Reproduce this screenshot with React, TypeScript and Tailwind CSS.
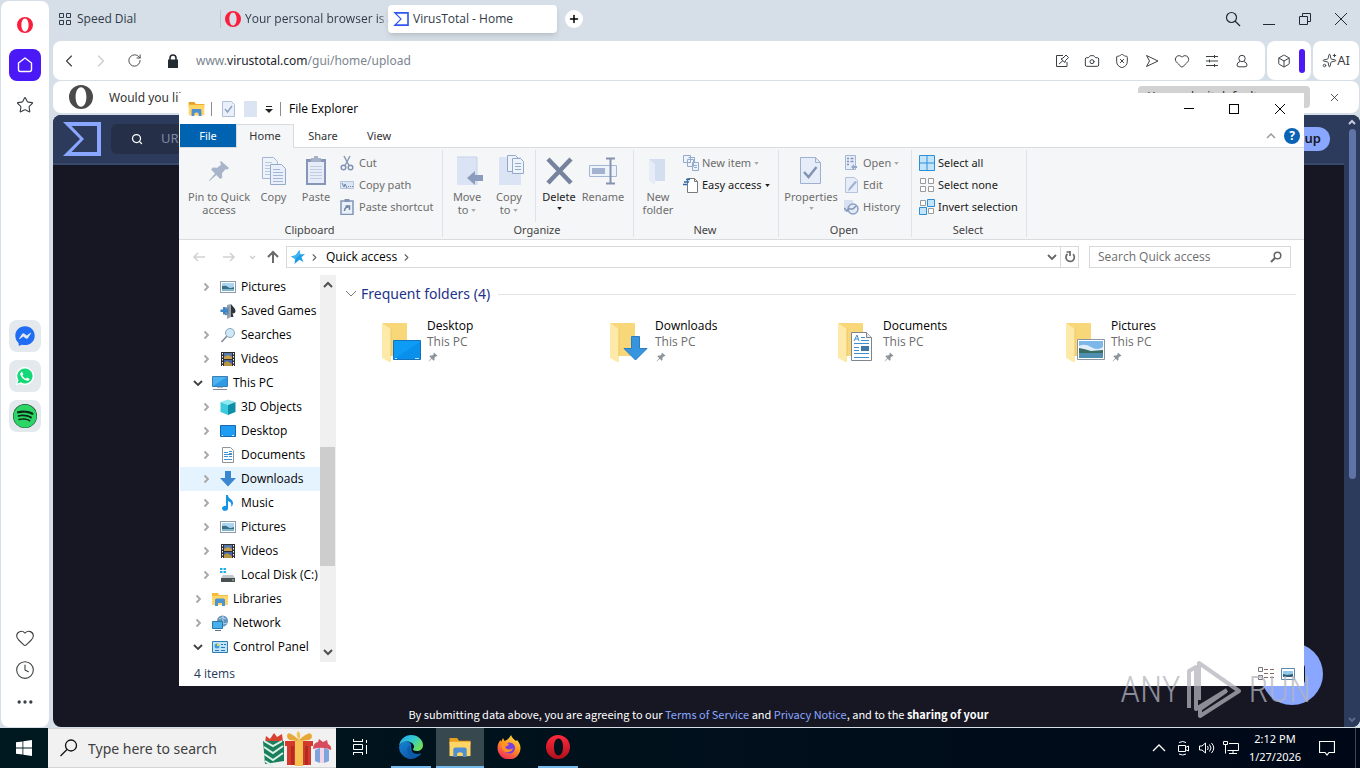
import { useState } from "react";
import type { ReactElement, ReactNode } from "react";
import { Box, Camera, ChevronLeft, ChevronRight, Clock4, Ellipsis, Heart, Plus, RotateCw, Search, ShieldX, Sparkles, Star, X } from "lucide-react";
import { FaFacebookMessenger, FaSpotify } from "react-icons/fa";

type IconProps = { className?: string };

/* ---------- shared drawings ---------- */

const OperaLogo = ({ className }: IconProps): ReactElement => (
  <svg viewBox="0 0 24 24" className={className} fill="currentColor" fillRule="evenodd" aria-hidden="true">
    <path d="M12 0a12 12 0 1 0 0 24 12 12 0 0 0 0-24zM12 2.200c3.300 0 5.400 4.400 5.400 9.800s-2.100 9.800-5.400 9.800-5.400-4.400-5.400-9.800 2.100-9.800 5.400-9.800z" />
  </svg>
);

const VtLogo = ({ className }: IconProps): ReactElement => (
  <svg viewBox="0 0 38 34" className={className} fill="currentColor" fillRule="evenodd" aria-hidden="true">
    <path d="M0 0h38v34H0l17-17zM8.500 4l12.500 13L8.500 30H34V4z" />
  </svg>
);

const Caret = ({ className }: IconProps): ReactElement => (
  <svg viewBox="0 0 6 4" className={`inline-block h-[3px] w-[5px] ${className ?? ""}`} aria-hidden="true">
    <path d="M0 0h6L3 4z" fill="currentColor" />
  </svg>
);

const Pin = ({ className }: IconProps): ReactElement => (
  <svg viewBox="0 0 22 22" className={className} fill="currentColor" aria-hidden="true">
    <path d="M13 1l8 7-1.500 1.500-2-.3-3.500 4 .3 4.300-2 1.500-4-4L1.500 21 1 20.500 7 13.500 3 9.500 5 7.500l4.300.3L13.200 4.500 12 2.500z" />
  </svg>
);

const ExplorerFolder = ({ className }: IconProps): ReactElement => (
  <svg viewBox="0 0 24 22" className={className} aria-hidden="true">
    <path d="M1 1h8l2 3h12v4H1z" fill="#e8a01e" />
    <path d="M1 5h22v15H1z" fill="#ffd666" />
    <path d="M5 21v-8q0-2 2-2h10q2 0 2 2v8h-4v-3q0-2-3-2t-3 2v3z" fill="#4d8fd0" />
  </svg>
);

/* ---------- navigation tree drawings, all on a 16px box ---------- */

const Svg16 = ({ children }: { children: ReactNode }): ReactElement => (
  <svg viewBox="0 0 16 16" className="size-4 shrink-0" aria-hidden="true">{children}</svg>
);

const PicturesIcon = (): ReactElement => (
  <Svg16>
    <rect x=".5" y="2.5" width="15" height="11" fill="#fff" stroke="#8f9aa5" />
    <rect x="2" y="4" width="12" height="8" fill="#a9d4f2" />
    <path d="M2 7q4-1 6 1t6 0v4H2z" fill="#3c6f86" />
    <path d="M2 10h12v2H2z" fill="#7fb6cf" />
  </Svg16>
);

const SavedGamesIcon = (): ReactElement => (
  <Svg16>
    <path d="M11 1c1 2 4.500 4 4.500 7 0 2-2 3-3 2l1 4H8z" fill="#2e3439" />
    <path d="M7 2l4-1v13l-4 2z" fill="#9aa3ab" />
    <path d="M5 5q3-2 4 0v6q-2 2-4 1z" fill="#6f8fae" />
    <path d="M3 4h2.500v2.500H8v2.500H5.500V11.500H3V9H.5V6.500H3z" fill="#3d85c6" />
  </Svg16>
);

const SearchesIcon = (): ReactElement => (
  <Svg16>
    <path d="M7 9l-5.500 6" stroke="#7d8a96" strokeWidth="1.500" />
    <circle cx="10" cy="6" r="4.500" fill="#cfe8f8" stroke="#8aa4b8" />
  </Svg16>
);

const VideosIcon = (): ReactElement => (
  <Svg16>
    <path d="M1 1h14v14H1z" fill="#2b2f33" />
    <path d="M4 2h8v6H4z" fill="#587aa8" />
    <path d="M4 6l4-2 4 2v2H4z" fill="#c9a24b" />
    <path d="M4 9h8v6H4z" fill="#4468a8" />
    <path d="M4 12l3-2 5 3v2H4z" fill="#b99443" />
    <path d="M2.500 2v13M13.500 2v13" stroke="#fff" strokeDasharray="1.500 1.500" />
  </Svg16>
);

const ThisPcIcon = (): ReactElement => (
  <Svg16>
    <path d="M.5 1.500h15v10H.5z" fill="#4db2f0" stroke="#3a7fb0" />
    <path d="M1 11L15 2v9z" fill="#2e9be6" />
    <path d="M1 14.500h14" stroke="#7f8a94" />
    <path d="M5 12.500h6" stroke="#b7c0c8" />
  </Svg16>
);

const ObjectsIcon = (): ReactElement => (
  <Svg16>
    <path d="M8 .5l7.500 2.500L8 6 .5 3z" fill="#8fe9f0" />
    <path d="M.5 3L8 6v10l-7.500-3z" fill="#3ccbdc" />
    <path d="M15.500 3L8 6v10l7.500-3z" fill="#0e8fa6" />
  </Svg16>
);

const DesktopIcon = (): ReactElement => (
  <Svg16>
    <path d="M.5 2.500h15v11H.5z" fill="#1e9cf2" stroke="#1469b0" />
    <path d="M2 12.500h1M12 12.500h2" stroke="#d5ecff" />
  </Svg16>
);

const DocumentsIcon = (): ReactElement => (
  <Svg16>
    <path d="M2.500.500h8l3 3v12h-11z" fill="#fff" stroke="#8b959e" />
    <path d="M4 5.500h4M9 4.500h3M9 6.500h3M4 9.500h4M9 9.500h3M4 12.500h8M4 7.500h8" stroke="#3c8fd0" />
  </Svg16>
);

const DownloadsIcon = (): ReactElement => (
  <Svg16>
    <path d="M5 0h6v7h5l-8 8.500L0 7h5z" fill="#3a86d0" />
  </Svg16>
);

const MusicIcon = (): ReactElement => (
  <Svg16>
    <path d="M6 0h2c0 4 5 4 5 8 0 2-1 3-2 4 1-3 0-5-3-6v7a3 2.500 0 1 1-2-2z" fill="#1793e6" />
  </Svg16>
);

const DiskIcon = (): ReactElement => (
  <Svg16>
    <path d="M0 1h2.500v2H0zM3.500 1H6v2H3.500zM0 4h2.500v2H0zM3.500 4H6v2H3.500z" fill="#22aee8" />
    <path d="M3 8h10l2 3H1z" fill="#c3c8cc" />
    <path d="M1 11h14v4H1z" fill="#4a4f54" />
    <path d="M12 13h2" stroke="#8fe37d" />
  </Svg16>
);

const LibrariesIcon = (): ReactElement => (
  <Svg16>
    <path d="M0 2h6l1 2h9v10H0z" fill="#f5bd3c" />
    <path d="M0 5h16v9H0z" fill="#ffd668" />
    <path d="M3 15V9q0-1.500 1.500-1.500h7Q13 7.500 13 9v6h-3v-3H6v3z" fill="#4d93d2" />
  </Svg16>
);

const NetworkIcon = (): ReactElement => (
  <Svg16>
    <circle cx="10.500" cy="6" r="5.500" fill="#5d93bd" />
    <path d="M7 4q3-3 7 0M8 8q3 2 7 0M11 1v8" stroke="#b8d6e8" fill="none" />
    <path d="M.5 6.500h10v7H.5z" fill="#49b0ee" stroke="#2c78ab" />
    <path d="M3 15.500h6" stroke="#5e7485" />
  </Svg16>
);

const ControlPanelIcon = (): ReactElement => (
  <Svg16>
    <path d="M.5 2.500h15v11H.5z" fill="#bfe3f8" stroke="#2f7cb5" />
    <circle cx="5" cy="7" r="2.500" fill="#3b9de0" />
    <path d="M5 4.500A2.500 2.500 0 0 1 7.500 7H5z" fill="#f2d24c" />
    <path d="M9 5.500h2M12 5.500h2M9 8.500h4M3 11.500h4M9 11.500h4" stroke="#2878b8" />
  </Svg16>
);

/* ---------- ribbon drawings ---------- */

const Svg32 = ({ children }: { children: ReactNode }): ReactElement => (
  <svg viewBox="0 0 32 32" className="mb-[3px] size-8 shrink-0" fill="none" aria-hidden="true">{children}</svg>
);

const CopyPages = (): ReactElement => (
  <Svg32>
    <path d="M4.500 2.500h11l4 4v17h-15z" fill="#eef3fa" stroke="#a3b6d4" />
    <path d="M7 7.500h7M7 10.500h9M7 13.500h9M7 16.500h9M7 19.500h9" stroke="#b9c8df" />
    <path d="M12.500 9.500h11l4 4v16h-15z" fill="#e9f0fb" stroke="#93aacd" />
    <path d="M15 14.500h7M15 17.500h10M15 20.500h10M15 23.500h10M15 26.500h10" stroke="#a3b6d4" />
  </Svg32>
);

const PasteBoard = (): ReactElement => (
  <Svg32>
    <path d="M6 4h20v26H6z" fill="#8796b8" />
    <path d="M8 7h16v21H8z" fill="#e6edf9" />
    <path d="M10 11.500h12M10 14.500h12M10 17.500h12M10 20.500h12M10 23.500h12" stroke="#c0cde2" />
    <path d="M11 3h3V1h4v2h3v4H11z" fill="#a7b2c8" />
  </Svg32>
);

const MoveTo = (): ReactElement => (
  <Svg32>
    <path d="M6 2h20v28H6z" fill="#dbe4f4" />
    <path d="M6 2h20v28" stroke="#c6d3ea" />
    <path d="M16 23l8-7v4h8v6h-8v4z" fill="#8b9cbc" />
  </Svg32>
);

const CopyTo = (): ReactElement => (
  <Svg32>
    <path d="M6 2h22v28H6z" fill="#dbe4f4" />
    <path d="M14.500.500h8l3 3v13h-11z" fill="#eef3fa" stroke="#93aacd" />
    <path d="M19.500 3.500h8l3 3v12h-11z" fill="#eef3fa" stroke="#93aacd" />
    <path d="M22 8.500h6M22 11.500h6M22 14.500h6" stroke="#93aacd" />
  </Svg32>
);

const DeleteCross = (): ReactElement => (
  <Svg32>
    <path d="M5 4l23 24M28 4L5 28" stroke="#76839d" strokeWidth="4.500" />
  </Svg32>
);

const RenameBox = (): ReactElement => (
  <Svg32>
    <path d="M2.500 10.500h27v11h-27z" fill="#eef3fa" stroke="#a3b6d4" />
    <path d="M5 13h13v6H5z" fill="#a3b3cf" />
    <path d="M19 3.500h4.500M28 3.500h-4.500v25M19 28.500h9" stroke="#8493b0" strokeWidth="2" />
  </Svg32>
);

const NewFolder = (): ReactElement => (
  <Svg32>
    <path d="M7 4h16v22H7z" fill="#d3deef" />
    <path d="M7 4l6 5v21l-6-4z" fill="#e6edf8" />
  </Svg32>
);

const PropertiesPage = (): ReactElement => (
  <Svg32>
    <path d="M5.500 2.500h15l5 5v21h-20z" fill="#e6edf9" stroke="#9fb1d0" />
    <path d="M20.500 2.500v5h5" stroke="#9fb1d0" />
    <path d="M9 17l4.500 5L21.500 12" stroke="#8294b6" strokeWidth="2.500" />
  </Svg32>
);

const CutIcon = (): ReactElement => (
  <Svg16>
    <path d="M4 1l5 9.500M10 1L5 10.500" stroke="#8b9ab5" strokeWidth="1.500" />
    <circle cx="3.500" cy="12.500" r="2.300" fill="none" stroke="#8294b6" strokeWidth="1.500" />
    <circle cx="10.500" cy="12.500" r="2.300" fill="none" stroke="#8294b6" strokeWidth="1.500" />
  </Svg16>
);

const CopyPathIcon = (): ReactElement => (
  <Svg16>
    <path d="M.5 4.500h13v7H.5z" fill="#dde6f4" stroke="#b5c4dc" />
    <path d="M2 6l2 4 1-3 2 4M8 9.500h1M10 9.500h1M12 9.500h1" stroke="#7084a8" fill="none" />
  </Svg16>
);

const PasteShortcutIcon = (): ReactElement => (
  <Svg16>
    <path d="M1 2h12v13.500H1z" fill="#eaf0fa" stroke="#8294b6" strokeWidth="1.500" />
    <path d="M4.500 0h5v3h-5z" fill="#8294b6" />
    <path d="M4.500 12c0-3 1-4 4-4M5.500 7h4v4" stroke="#6f82a6" fill="none" strokeWidth="1.500" />
  </Svg16>
);

const NewItemIcon = (): ReactElement => (
  <Svg16>
    <path d="M.5.500h7v7h-7zM4.500 4.500h6v7h-6zM9.500 7.500h6v8h-6z" fill="#eef3fa" stroke="#93aacd" />
    <path d="M5.500 2.500h6v5" fill="none" stroke="#93aacd" />
    <path d="M11 10.500h3M11 12.500h3" stroke="#93aacd" />
  </Svg16>
);

const EasyAccessIcon = (): ReactElement => (
  <Svg16>
    <path d="M4.500 1.500h7l3 3v11h-10z" fill="#fff" stroke="#7a7a7a" />
    <path d="M11.500 1.500v3h3" stroke="#7a7a7a" fill="none" />
    <path d="M3 2.500h4M1 5h5M0 7.500h4" stroke="#2a6cab" strokeWidth="1.500" />
  </Svg16>
);

const OpenIcon = (): ReactElement => (
  <Svg16>
    <path d="M1.500.500h10v14h-10z" fill="#e6edf9" stroke="#a3b6d4" />
    <path d="M3 3.500h2M3 6.500h2M3 9.500h2M6.500 3.500h3M6.500 6.500h3" stroke="#8294b6" strokeWidth="1.500" />
    <path d="M7 12l3-3v2h3v2h-3v2z" fill="#93a6c8" />
  </Svg16>
);

const EditIcon = (): ReactElement => (
  <Svg16>
    <path d="M1.500.500h9l3 3v12h-12z" fill="#e6edf9" stroke="#b5c4dc" />
    <path d="M13 5L7 12l-3 2.500 1-3.500 6-7z" fill="#9fb1d0" />
  </Svg16>
);

const HistoryIcon = (): ReactElement => (
  <Svg16>
    <path d="M0 1h9v12H0z" fill="#d7e1f2" />
    <circle cx="9" cy="10" r="5" fill="#e2eaf6" stroke="#8da0c2" strokeWidth="1.500" />
    <path d="M9 10l3-3M6 10h3M0 9l3 3 3-3" stroke="#8294b6" fill="none" strokeWidth="1.500" />
  </Svg16>
);

const SelectAllIcon = (): ReactElement => (
  <Svg16>
    <path d="M.5.500h15v15H.5zM8 0v16M0 8h16" fill="#c2e5fb" stroke="#2f8fd6" />
  </Svg16>
);

const SelectNoneIcon = (): ReactElement => (
  <Svg16>
    <path d="M1.500 1.500h5v5h-5zM9.500 1.500h5v5h-5zM1.500 9.500h5v5h-5zM9.500 9.500h5v5h-5z" fill="#fff" stroke="#9a9a9a" />
  </Svg16>
);

const InvertIcon = (): ReactElement => (
  <Svg16>
    <path d="M1.500 1.500h5v5h-5zM9.500 9.500h5v5h-5z" fill="#fff" stroke="#9a9a9a" />
    <path d="M8.500.500h7v7h-7zM.5 8.500h7v7h-7z" fill="#c2e5fb" stroke="#2f8fd6" />
  </Svg16>
);

/* ---------- large folders in the content pane ---------- */

const FolderArt = ({ children }: { children: ReactNode }): ReactElement => (
  <svg viewBox="0 0 40 44" className="h-11 w-10 shrink-0" aria-hidden="true">
    <path d="M1 5h24v33H1z" fill="#f7d777" />
    <path d="M0 5l9 6v34l-9-5z" fill="#fde9a8" />
    <path d="M9 11v27" stroke="#ecc765" />
    {children}
  </svg>
);

const frequentFolders = [
  {
    name: "Desktop",
    art: (
      <FolderArt>
        <path d="M11.500 22.500h27v19h-27z" fill="#0d9bf5" stroke="#1272bd" />
        <path d="M12 41L38 24v17z" fill="#0890ec" />
        <path d="M13 40.500h2M33 40.500h4" stroke="#bfe3ff" />
      </FolderArt>
    )
  },
  {
    name: "Downloads",
    art: (
      <FolderArt>
        <path d="M21.500 18.500h8v12h7.500L25.500 42 14 30.500h7.500z" fill="#3795e0" stroke="#2b7cc2" />
      </FolderArt>
    )
  },
  {
    name: "Documents",
    art: (
      <FolderArt>
        <path d="M13.500 14.500h15l5 5v23h-20z" fill="#fff" stroke="#7d868e" />
        <path d="M28.500 14.500v5h5" fill="#e4e8ec" stroke="#7d868e" />
        <path d="M16 23l3-6 2 6M17 21h3M23 19.500h4M23 22.500h8M16 25.500h15M16 29.500h5M16 32.500h5M16 35.500h15M16 39.500h15" stroke="#3f8fce" fill="none" />
        <path d="M23 28h8v5h-8z" fill="#3f78a8" />
      </FolderArt>
    )
  },
  {
    name: "Pictures",
    art: (
      <FolderArt>
        <path d="M11.500 21.500h27v20h-27z" fill="#fff" stroke="#8b959e" />
        <path d="M13 23h24v17H13z" fill="#7db7ea" />
        <path d="M13 28q6-3 12 1t12 0v5H13z" fill="#dfeefa" />
        <path d="M13 30q6 1 12 3l12-1v4H13z" fill="#3c6b62" />
        <path d="M13 35h24v5H13z" fill="#4f8fb0" />
      </FolderArt>
    )
  }
];

const tree = [
  { label: "Pictures", icon: <PicturesIcon />, depth: 1, state: "closed" },
  { label: "Saved Games", icon: <SavedGamesIcon />, depth: 1, state: "leaf" },
  { label: "Searches", icon: <SearchesIcon />, depth: 1, state: "closed" },
  { label: "Videos", icon: <VideosIcon />, depth: 1, state: "closed" },
  { label: "This PC", icon: <ThisPcIcon />, depth: 0, state: "open" },
  { label: "3D Objects", icon: <ObjectsIcon />, depth: 1, state: "closed" },
  { label: "Desktop", icon: <DesktopIcon />, depth: 1, state: "closed" },
  { label: "Documents", icon: <DocumentsIcon />, depth: 1, state: "closed" },
  { label: "Downloads", icon: <DownloadsIcon />, depth: 1, state: "closed", active: true },
  { label: "Music", icon: <MusicIcon />, depth: 1, state: "closed" },
  { label: "Pictures", icon: <PicturesIcon />, depth: 1, state: "closed" },
  { label: "Videos", icon: <VideosIcon />, depth: 1, state: "closed" },
  { label: "Local Disk (C:)", icon: <DiskIcon />, depth: 1, state: "closed" },
  { label: "Libraries", icon: <LibrariesIcon />, depth: 0, state: "closed" },
  { label: "Network", icon: <NetworkIcon />, depth: 0, state: "closed" },
  { label: "Control Panel", icon: <ControlPanelIcon />, depth: 0, state: "open" }
];

/* ---------- browser ---------- */

const Sidebar = (): ReactElement => (
  <nav aria-label="Sidebar" className="my-px ml-px flex w-12 shrink-0 flex-col items-center rounded-lg bg-white text-[#3c4043]">
    <button aria-label="Opera menu" className="mt-2 flex size-8 items-center justify-center text-[#fa1e3c]"><OperaLogo className="size-4" /></button>
    <button aria-label="Home" className="mt-2 flex size-8 items-center justify-center rounded-lg bg-[#4b19f5] text-white">
      <svg viewBox="0 0 18 18" className="size-[18px]" fill="none" stroke="currentColor" strokeWidth="1.400" strokeLinejoin="round"><path d="M2.500 7L9 2l6.500 5v6.500q0 2-2 2h-9q-2 0-2-2z" /></svg>
    </button>
    <button aria-label="Bookmarks" className="mt-2 flex size-8 items-center justify-center"><Star size={18} strokeWidth={1.5} /></button>
    <div className="flex-1" />
    <div className="mb-[190px] flex flex-col gap-2">
      <button aria-label="Messenger" className="flex size-8 items-center justify-center rounded-lg bg-[#e4e9ee] text-[#1f6cf5]"><FaFacebookMessenger size={20} /></button>
      <button aria-label="WhatsApp" className="flex size-8 items-center justify-center rounded-lg bg-[#e4e9ee]">
        <svg viewBox="0 0 20 20" className="size-5" aria-hidden="true">
          <path d="M10 1a9 9 0 1 1-4.300 16.900L1 19l1.200-4.500A9 9 0 0 1 10 1z" fill="#fff" />
          <path d="M10 2.500a7.500 7.500 0 1 1-4 13.800L2.500 17.500l1-3.500A7.500 7.500 0 0 1 10 2.500z" fill="#12d878" />
          <path d="M7 5.500l1.300 2.700-.9 1.200c.8 1.600 2 2.700 3.500 3.300l1.200-1.100 2.500 1.300c-.4 1.600-1.700 2-3 1.700-3-.7-5.700-3.300-6.300-6.100C5.200 7.200 5.800 5.900 7 5.500z" fill="#fff" />
        </svg>
      </button>
      <button aria-label="Spotify" className="flex size-8 items-center justify-center rounded-lg bg-[#e4e9ee]">
        <span className="flex rounded-full bg-[#0b2615] text-[#2bd566]"><FaSpotify size={24} /></span>
      </button>
    </div>
    <button aria-label="Favourites" className="flex size-8 items-center justify-center"><Heart size={20} strokeWidth={1.3} /></button>
    <button aria-label="History" className="flex size-8 items-center justify-center"><Clock4 size={20} strokeWidth={1.3} /></button>
    <button aria-label="More" className="mb-[9px] flex size-8 items-center justify-center"><Ellipsis size={20} strokeWidth={2} /></button>
  </nav>
);

const TabStrip = (): ReactElement => (
  <header className="flex h-[41px] items-center pb-[3px] font-['Open_Sans',sans-serif] text-[12px] text-[#2f3b47]">
    <button className="flex w-[167px] items-center gap-[5px] pl-[5px]">
      <svg viewBox="0 0 14 14" className="size-3.5" fill="none" stroke="currentColor" aria-hidden="true">
        <path d="M1.500 1.500h4v4h-4zM8.500 1.500h4v4h-4zM1.500 8.500h4v4h-4zM8.500 8.500h4v4h-4z" />
      </svg>
      Speed Dial
    </button>
    <button className="flex w-[168px] items-center gap-1 border-l border-[#b9c5d0] pl-1">
      <OperaLogo className="size-4 shrink-0 text-[#fa1e3c]" />
      <span className="whitespace-nowrap mask-r-from-90% mask-r-to-97%">Your personal browser is a</span>
    </button>
    <button className="flex h-7 w-[169px] items-center gap-1 rounded-sm bg-white pl-[5px] shadow-md">
      <VtLogo className="h-3.5 w-4 shrink-0 text-[#3157f0]" />
      VirusTotal - Home
    </button>
    <button aria-label="New tab" className="ml-2 flex size-[18px] items-center justify-center rounded-full bg-white text-black"><Plus size={12} strokeWidth={3} /></button>
    <div className="ml-auto flex items-center gap-5 pr-[11px] text-[#1f2a36]">
      <button aria-label="Search tabs">
        <svg viewBox="0 0 16 16" className="size-4" fill="none" stroke="currentColor" strokeWidth="1.200"><circle cx="6.500" cy="6.500" r="5" /><path d="M10 10l5 5" /></svg>
      </button>
      <button aria-label="Minimize" className="flex h-4 w-4 items-end justify-center pb-0.5"><span className="h-px w-3 bg-[#1f2a36]" /></button>
      <button aria-label="Restore">
        <svg viewBox="0 0 16 16" className="size-4" fill="none" stroke="currentColor"><path d="M2.500 5.500h8v8h-8zM5.500 5.500v-3h8v8h-3" /></svg>
      </button>
      <button aria-label="Close">
        <svg viewBox="0 0 16 16" className="size-4" fill="none" stroke="currentColor"><path d="M2 2l12 12M14 2L2 14" /></svg>
      </button>
    </div>
  </header>
);

const AddressRow = (): ReactElement => (
  <div className="flex gap-0.5 pr-px text-[#3c4043]">
    <div className="flex h-[39px] min-w-0 flex-1 items-center rounded-lg bg-white pr-[9px] pl-1.5">
      <button aria-label="Back"><ChevronLeft size={20} strokeWidth={1.3} /></button>
      <button aria-label="Forward" className="ml-3 text-[#c6c9cc]"><ChevronRight size={20} strokeWidth={1.3} /></button>
      <button aria-label="Reload" className="ml-4"><RotateCw size={15} strokeWidth={1.5} /></button>
      <svg viewBox="0 0 12 14" className="ml-[25px] h-3.5 w-3" aria-hidden="true"><path d="M3 6V4a3 3 0 0 1 6 0v2" fill="none" stroke="#232b33" strokeWidth="1.600" /><path d="M1 5.500h10V14H1z" fill="#232b33" /></svg>
      <div role="textbox" aria-label="Address" contentEditable suppressContentEditableWarning className="ml-[17px] flex-1 text-[12px] whitespace-nowrap text-[#7b858f] outline-none">
        www.<span className="text-[#1c242c]">virustotal.com</span>/gui/home/upload
      </div>
      <div className="flex items-center gap-3.5 pr-1.5">
        <button aria-label="Pin page">
          <svg viewBox="0 0 16 16" className="size-4" fill="none" stroke="currentColor"><path d="M9 2.500H2.500v11H13V9M9 5l3-3 2.500 2.500-3 3-.5 2L7 6zM9 7.500L5 11" /></svg>
        </button>
        <button aria-label="Snapshot"><Camera size={16} strokeWidth={1.5} /></button>
        <button aria-label="Blocker"><ShieldX size={16} strokeWidth={1.5} /></button>
        <button aria-label="Flow">
          <svg viewBox="0 0 16 16" className="size-4" fill="none" stroke="currentColor" strokeLinejoin="round"><path d="M2.500 2.500L14 8 2.500 13.500 5.500 8z" /></svg>
        </button>
        <button aria-label="Favourite"><Heart size={16} strokeWidth={1.5} /></button>
        <button aria-label="Easy setup">
          <svg viewBox="0 0 16 16" className="size-4" fill="none" stroke="currentColor"><path d="M2 3.500h12M2 8h12M2 12.500h12M10.500 2v3M5.500 6.500v3M10.500 11v3" /></svg>
        </button>
        <button aria-label="Profile">
          <svg viewBox="0 0 16 16" className="size-4" fill="none" stroke="currentColor"><circle cx="8" cy="5.500" r="3.200" /><path d="M6 8.500q-3 1-3 3.500 0 1.800 2 1.800h6q2 0 2-1.800 0-2.500-3-3.500" /></svg>
        </button>
      </div>
    </div>
    <div className="flex h-[39px] w-11 items-center justify-end gap-2 rounded-lg bg-white pr-1.5">
      <button aria-label="Extensions"><Box size={14} strokeWidth={1.7} /></button>
      <span className="h-6 w-1.5 rounded-full bg-[#4b19f5]" />
    </div>
    <button className="flex h-[39px] w-[46px] items-center justify-center rounded-lg bg-white text-[13px]">
      <Sparkles size={15} strokeWidth={1.5} />AI
    </button>
  </div>
);

const InfoBar = (): ReactElement => (
  <div className="mt-px mr-px mb-0.5 flex h-8 items-center rounded-lg bg-white pr-[18px] pl-4 text-[12px] text-[#333]">
    <OperaLogo className="size-6 shrink-0 text-[#4a4a4a]" />
    <span className="ml-4 pt-px whitespace-nowrap">Would you lik</span>
    <button className="ml-auto h-[22px] w-[172px] rounded-sm bg-[#d2d2d2] px-2.5 text-left text-[12px] whitespace-nowrap">Yes, make it default</button>
    <button aria-label="Dismiss" className="ml-[18px]"><X size={13} strokeWidth={1.5} /></button>
  </div>
);

const VirusTotalPage = (): ReactElement => (
  <main className="flex min-h-0 flex-1 overflow-hidden rounded-lg bg-[#171724]">
    <div className="relative flex min-w-0 flex-1 flex-col">
      <div className="flex h-[50px] shrink-0 items-center border-b-2 border-[#36486b] bg-[#2c3b5c] pr-3.5 pl-2.5">
        <VtLogo className="h-[34px] w-[38px] text-[#8aa7ff]" />
        <label className="ml-2.5 flex h-[30px] w-[700px] items-center rounded-md bg-[#252f48] pl-5 text-[13px] text-[#7d8aa5]">
          <Search size={12} strokeWidth={2.5} className="text-white" />
          <input aria-label="Search VirusTotal" placeholder="URL" className="ml-[18px] flex-1 bg-transparent outline-none placeholder:text-[#7d8aa5]" />
        </label>
        <button aria-label="Sign up" className="ml-auto h-6 w-[72px] rounded-full bg-[#8aa7ff] pr-[9px] text-right text-[13px] font-semibold text-[#171724]">up</button>
      </div>
      <p className="mt-auto mb-[5px] text-center font-['Noto_Sans_CJK_SC',sans-serif] text-[11px] leading-4 font-normal text-white">
        By submitting data above, you are agreeing to our <a href="#terms" className="text-[#8aa7ff]">Terms of Service</a> and <a href="#privacy" className="text-[#8aa7ff]">Privacy Notice</a>, and to the <b>sharing of your</b>
      </p>
      <button aria-label="Chat" className="absolute right-[21px] bottom-[22px] size-[62px] rounded-full bg-[#8aa7ff]">
        <span className="ml-3 block h-5 w-8 rounded-sm bg-[#171724]" />
      </button>
    </div>
    <div className="flex w-4 flex-col items-center justify-between bg-[#2c3b5c] py-1 text-[#c3cbdc]">
      <svg viewBox="0 0 8 6" className="h-1.5 w-2" fill="none" stroke="currentColor" strokeWidth="2"><path d="M1 5l3-3 3 3" /></svg>
      <div className="mt-1 mb-auto h-[350px] w-[7px] rounded-full bg-[#6073a8]" />
      <svg viewBox="0 0 8 6" className="h-1.5 w-2 text-[#5a6788]" fill="none" stroke="currentColor" strokeWidth="2"><path d="M1 1l3 3 3-3" /></svg>
    </div>
  </main>
);

/* ---------- file explorer ---------- */

type BigButtonProps = { icon: ReactElement; width: string; enabled?: boolean; children: ReactNode };

const BigButton = ({ icon, width, enabled, children }: BigButtonProps): ReactElement => (
  <button className={`flex flex-col items-center pt-[5px] text-center leading-[13px] ${width} ${enabled ? "text-[#1b1b1b]" : "text-[#6d6d6d]"}`}>
    {icon}
    {children}
  </button>
);

type SmallButtonProps = { icon: ReactElement; enabled?: boolean; caret?: boolean; children: ReactNode };

const SmallButton = ({ icon, enabled, caret, children }: SmallButtonProps): ReactElement => (
  <button className={`flex h-[22px] items-center gap-[3px] whitespace-nowrap ${enabled ? "text-[#1b1b1b]" : "text-[#6d6d6d]"}`}>
    {icon}
    {children}
    {caret && <Caret className={enabled ? "" : "text-[#a9a9a9]"} />}
  </button>
);

type GroupProps = { label: string; width: string; inset: string; children: ReactNode };

const RibbonGroup = ({ label, width, inset, children }: GroupProps): ReactElement => (
  <section aria-label={label} className={`flex shrink-0 flex-col border-r border-[#dfe3e8] ${width}`}>
    <div className={`flex h-[73px] ${inset}`}>{children}</div>
    <div className="pr-0.5 text-center leading-[15px] text-[#444]">{label}</div>
  </section>
);

const Ribbon = (): ReactElement => (
  <div className="flex h-[92px] shrink-0 border-b border-[#dadbdc] bg-[#f5f6f7] py-0.5 font-['Noto_Sans',sans-serif] text-[11px]">
    <RibbonGroup label="Clipboard" width="w-[264px]" inset="pl-[5px]">
      <BigButton icon={<div className="mb-[3px] flex size-8 items-center justify-center text-[#a7b4c9]"><Pin className="size-[22px]" /></div>} width="w-[70px]">Pin to Quick access</BigButton>
      <BigButton icon={<CopyPages />} width="w-[39px]">Copy</BigButton>
      <BigButton icon={<PasteBoard />} width="w-[46px]">Paste</BigButton>
      <div className="ml-px flex flex-col pt-0.5">
        <SmallButton icon={<CutIcon />}>Cut</SmallButton>
        <SmallButton icon={<CopyPathIcon />}>Copy path</SmallButton>
        <SmallButton icon={<PasteShortcutIcon />}>Paste shortcut</SmallButton>
      </div>
    </RibbonGroup>
    <RibbonGroup label="Organize" width="w-[191px]" inset="pl-[3px]">
      <BigButton icon={<MoveTo />} width="w-[42px]">
        <span>Move</span>
        <span>to <Caret className="mb-0.5 text-[#a9a9a9]" /></span>
      </BigButton>
      <BigButton icon={<CopyTo />} width="w-[42px]">
        <span>Copy</span>
        <span>to <Caret className="mb-0.5 text-[#a9a9a9]" /></span>
      </BigButton>
      <div className="ml-[5px] w-px bg-[#dfe3e8]" />
      <BigButton icon={<DeleteCross />} width="w-[46px]" enabled>Delete<Caret className="mt-1" /></BigButton>
      <BigButton icon={<RenameBox />} width="w-[42px]">Rename</BigButton>
    </RibbonGroup>
    <RibbonGroup label="New" width="w-[145px]" inset="pl-0.5">
      <BigButton icon={<NewFolder />} width="w-11">New folder</BigButton>
      <div className="ml-[3px] flex flex-col pt-0.5">
        <SmallButton icon={<NewItemIcon />} caret>New item</SmallButton>
        <SmallButton icon={<EasyAccessIcon />} enabled caret>Easy access</SmallButton>
      </div>
    </RibbonGroup>
    <RibbonGroup label="Open" width="w-[133px]" inset="pl-0.5">
      <BigButton icon={<PropertiesPage />} width="w-[60px]">Properties<Caret className="mt-1 text-[#a9a9a9]" /></BigButton>
      <div className="ml-[3px] flex flex-col pt-0.5">
        <SmallButton icon={<OpenIcon />} caret>Open</SmallButton>
        <SmallButton icon={<EditIcon />}>Edit</SmallButton>
        <SmallButton icon={<HistoryIcon />}>History</SmallButton>
      </div>
    </RibbonGroup>
    <RibbonGroup label="Select" width="w-[115px]" inset="pl-[7px]">
      <div className="flex flex-col pt-0.5">
        <SmallButton icon={<SelectAllIcon />} enabled>Select all</SmallButton>
        <SmallButton icon={<SelectNoneIcon />} enabled>Select none</SmallButton>
        <SmallButton icon={<InvertIcon />} enabled>Invert selection</SmallButton>
      </div>
    </RibbonGroup>
  </div>
);

const ExplorerTitle = (): ReactElement => (
  <div className="flex h-[31px] shrink-0 items-center pl-[9px]">
    <ExplorerFolder className="h-4 w-[17px]" />
    <span className="ml-1.5 h-3.5 w-px bg-[#8c8c8c]" />
    <button aria-label="Properties" className="ml-2.5">
      <svg viewBox="0 0 14 16" className="h-4 w-3.5" fill="none"><path d="M.5.5h9l3 3v12H.5z" fill="#eaf0fa" stroke="#aebfda" /><path d="M3 8l2.500 3L10 5" stroke="#8ea2c4" strokeWidth="1.500" /></svg>
    </button>
    <button aria-label="New folder" className="ml-2 h-4 w-[13px] bg-[#dbe4f3]" />
    <button aria-label="Customize toolbar" className="ml-2">
      <svg viewBox="0 0 8 8" className="size-2"><path d="M1 1h6v1H1zM0 4h8L4 8z" fill="#222" /></svg>
    </button>
    <span className="ml-[7px] h-3.5 w-px bg-[#8c8c8c]" />
    <h1 className="ml-2">File Explorer</h1>
    <div className="ml-auto flex h-full pr-px text-black">
      <button aria-label="Minimize window" className="flex w-[45px] items-center justify-center"><span className="h-px w-2.5 bg-black" /></button>
      <button aria-label="Maximize window" className="flex w-[46px] items-center justify-center"><span className="size-2.5 border border-black" /></button>
      <button aria-label="Close window" className="flex w-[46px] items-center justify-center">
        <svg viewBox="0 0 12 12" className="size-3" stroke="currentColor"><path d="M1 1l10 10M11 1L1 11" /></svg>
      </button>
    </div>
  </div>
);

const ribbonTabs = ["File", "Home", "Share", "View"];

const RibbonTabs = (): ReactElement => {
  const [active, setActive] = useState("Home");

  return (
    <div className="flex h-6 shrink-0 border-b border-[#dadbdc] pl-px font-['Noto_Sans',sans-serif] text-[11px] text-[#333]">
      {ribbonTabs.map(tab => (
        <button
          key={tab}
          onClick={() => tab !== "File" && setActive(tab)}
          className={
            tab === "File" ? "w-14 bg-[#0063b1] pt-0.5 text-white"
              : tab === active ? "-mb-px w-[58px] border-x border-t border-[#dadbdc] bg-[#f5f6f7]"
                : "w-14 pt-0.5 pl-0.5"
          }
        >
          {tab}
        </button>
      ))}
      <div className="ml-auto flex items-center gap-2 pr-1">
        <button aria-label="Collapse ribbon">
          <svg viewBox="0 0 10 6" className="h-1.5 w-2.5" fill="none" stroke="#9a9a9a" strokeWidth="1.500"><path d="M1 5l4-4 4 4" /></svg>
        </button>
        <button aria-label="Help" className="size-4 rounded-full bg-[#0b63b5] text-[12px] leading-4 font-bold text-white">?</button>
      </div>
    </div>
  );
};

const AddressBar = (): ReactElement => (
  <div className="flex h-[34px] shrink-0 items-center pr-[13px] pl-[13px]">
    <svg viewBox="0 0 90 16" className="h-4 w-[90px] shrink-0" fill="none" strokeWidth="1.500" role="img" aria-label="Back, forward, up">
      <path d="M13 8H2M6 4L2 8l4 4M31 8h11M38 4l4 4-4 4" stroke="#cfd2d5" />
      <path d="M58 7l2.500 2.500L63 7" stroke="#cfd2d5" />
      <path d="M81 14V3M76 8l5-5 5 5" stroke="#6a6a6a" strokeWidth="2" />
    </svg>
    <div className="ml-1 flex h-[22px] flex-1 items-center border border-[#d9d9d9] pl-1">
      <svg viewBox="0 0 14 14" className="size-3.5" aria-hidden="true">
        <path d="M8.500 0l.8 4.500 4.700-.5-3.600 3.300L12.500 12l-4-2.200L3.500 14l.7-5L0 6.500l4.800-1.200z" fill="#1b9de8" />
        <path d="M8.500 0l.8 4.500L4.200 9 0 6.500l4.800-1.200z" fill="#3fb2f0" />
      </svg>
      <ChevronRight size={11} strokeWidth={2.5} className="ml-1 text-[#666]" />
      <button className="ml-1.5">Quick access</button>
      <ChevronRight size={11} strokeWidth={2.5} className="ml-1 text-[#666]" />
      <button aria-label="Previous locations" className="ml-auto pr-[3px] text-[#666]">
        <svg viewBox="0 0 10 8" className="h-2 w-2.5" fill="none" stroke="currentColor" strokeWidth="1.800"><path d="M1 2l4 4 4-4" /></svg>
      </button>
      <button aria-label="Refresh" className="flex h-full w-[18px] items-center justify-center border-l border-[#d9d9d9] text-[#6a6a6a]">
        <svg viewBox="0 0 12 12" className="size-3" fill="none" stroke="currentColor" strokeWidth="1.700"><path d="M9 3.200A4.200 4.200 0 1 1 3.500 3M6.500 1H2.500M6 0v5" /></svg>
      </button>
    </div>
    <label className="ml-2.5 flex h-[22px] w-[202px] items-center border border-[#d9d9d9] px-2">
      <input aria-label="Search Quick access" placeholder="Search Quick access" className="min-w-0 flex-1 bg-transparent outline-none placeholder:text-[#6d6d6d]" />
      <svg viewBox="0 0 12 12" className="size-3" fill="none" stroke="#666" aria-hidden="true"><circle cx="7.500" cy="4.500" r="3.300" strokeWidth="1.500" /><path d="M5 7L1 11" strokeWidth="2" /></svg>
    </label>
  </div>
);

const NavTree = (): ReactElement => (
  <nav aria-label="Folders" className="flex w-[157px] shrink-0 pl-px">
    <ul className="w-[140px]">
      {tree.map(({ label, icon, depth, state, active }, i) => (
        <li key={i}>
          <button className={`flex h-6 w-full items-center whitespace-nowrap ${depth ? "pl-5" : "pl-3"} ${active ? "bg-[#e5f3ff]" : ""}`}>
            <svg viewBox="0 0 12 12" className="size-3 shrink-0" fill="none" strokeWidth="1.800" aria-hidden="true">
              {state === "closed" && <path d="M4.500 2.500L8 6l-3.500 3.500" stroke="#a6a6a6" />}
              {state === "open" && <path d="M2 4l4 4 4-4" stroke="#404040" />}
            </svg>
            <span className="mr-[5px] ml-2">{icon}</span>
            {label}
          </button>
        </li>
      ))}
    </ul>
    <div className="flex w-4 flex-col items-center justify-between bg-[#f0f0f0] py-1.5 pr-px text-[#505050]">
      <svg viewBox="0 0 10 8" className="h-2 w-2.5" fill="none" stroke="currentColor" strokeWidth="2"><path d="M1 6l4-4 4 4" /></svg>
      <div className="mt-[158px] mb-auto h-[119px] w-full bg-[#cdcdcd]" />
      <svg viewBox="0 0 10 8" className="h-2 w-2.5" fill="none" stroke="currentColor" strokeWidth="2"><path d="M1 2l4 4 4-4" /></svg>
    </div>
  </nav>
);

const FolderGrid = (): ReactElement => (
  <section className="min-w-0 flex-1 pr-2 pl-[9px]">
    <h2 className="flex items-center pt-[9px] font-['Noto_Sans',sans-serif] text-[14px] leading-5 text-[#1e3287]">
      <svg viewBox="0 0 12 8" className="mr-1 h-2 w-3" fill="none" stroke="#7a7a7a"><path d="M1 1l5 5 5-5" /></svg>
      Frequent folders (4)
      <span className="ml-2 h-px flex-1 bg-[#e2e2e2]" />
    </h2>
    <ul className="mt-3.5 flex flex-wrap pl-[37px]">
      {frequentFolders.map(({ name, art }) => (
        <li key={name} className="flex w-[228px] gap-[5px]">
          {art}
          <div className="leading-4">
            <div>{name}</div>
            <div className="text-[#6d6d6d]">This PC</div>
            <Pin className="mt-0.5 ml-px size-2.5 text-[#8c949c]" />
          </div>
        </li>
      ))}
    </ul>
  </section>
);

const FileExplorer = (): ReactElement => (
  <div className="absolute top-[93px] right-14 bottom-[82px] left-[179px] flex flex-col bg-white font-['Open_Sans',sans-serif] text-[12px] text-black">
    <ExplorerTitle />
    <RibbonTabs />
    <Ribbon />
    <AddressBar />
    <div className="mt-px flex min-h-0 flex-1 overflow-hidden">
      <NavTree />
      <FolderGrid />
    </div>
    <footer className="flex h-6 shrink-0 items-center pr-[9px] pl-[15px] text-[#1e395b]">
      4 items
      <button aria-label="Details view" className="ml-auto">
        <svg viewBox="0 0 16 14" className="h-3.5 w-4" fill="none"><path d="M.5.5h4v4h-4zM.5 8.500h4v4h-4z" stroke="#777" /><path d="M6 2.500h10M6 6.500h10M6 10.500h10" stroke="#8a6a60" strokeDasharray="4 2" /></svg>
      </button>
      <button aria-label="Thumbnail view" className="ml-[7px]">
        <svg viewBox="0 0 14 12" className="h-3 w-3.5"><path d="M.5.5h13v11H.5z" fill="#fff" stroke="#5b87a8" /><path d="M2 3h10v6H2z" fill="#8ec8ea" /><path d="M2 6l4 1 6-1v3H2z" fill="#2f5d78" /></svg>
      </button>
    </footer>
  </div>
);

/* ---------- taskbar ---------- */

const Gifts = (): ReactElement => (
  <svg viewBox="0 0 70 38" className="ml-auto h-[38px] w-[70px]" aria-hidden="true">
    <path d="M3 13l1-6 4 3 4-6 3 4 5-3 1 8z" fill="#d8402f" />
    <path d="M1 12h21v20l-19 3z" fill="#1b7f5e" />
    <path d="M2 18l9 6 10-7M2 25l9 6 10-7M3 32l8 5M2 12l9 5 9-5" stroke="#d9f2e4" strokeWidth="2" fill="none" />
    <path d="M23 12h28v5H23zM25 17h24v19H25z" fill="#d33a2c" />
    <path d="M29 17h3v19h-3zM43 17h3v19h-3z" fill="#b42a22" />
    <path d="M33 11h8v26h-8z" fill="#f4c152" />
    <path d="M37 11q-12 2-12-4 0-7 12 4 12-11 13-4 0 6-13 4z" fill="#e8a836" />
    <path d="M37 11q-4-6-1-9 4 3 1 9z" fill="#f4c152" />
    <path d="M53 21q7-5 14 0v11q-7 4-14 0z" fill="#7fa3dc" />
    <path d="M58 18h4v16h-4z" fill="#f0d5e8" />
    <path d="M51 20q0-6 5-7l1-3 4 3 4-2 1 4q4 2 3 6-8-4-18-1z" fill="#d84b5c" />
  </svg>
);

const EdgeLogo = (): ReactElement => (
  <svg viewBox="0 0 24 24" className="size-6" aria-hidden="true">
    <defs>
      <linearGradient id="edge-top" x1="0" y1="0" x2="1" y2=".6"><stop stopColor="#2b9be8" /><stop offset=".5" stopColor="#2fc6d8" /><stop offset="1" stopColor="#6fe05c" /></linearGradient>
      <linearGradient id="edge-low" x1="0" y1="0" x2="1" y2="1"><stop stopColor="#1585d8" /><stop offset="1" stopColor="#0b4a94" /></linearGradient>
    </defs>
    <path d="M0 12a12 12 0 0 0 22 6.500c-4 1.500-10 0-9.500-4.500L12 9C9 5 2 6 0 12z" fill="url(#edge-low)" />
    <path d="M0 11C1 4 6 0 12 0c7 0 12 5 12 10 0 4-3 6-6 6s-4-1-4-2c1-1 1-1.500 1-2.500C15 9 12 6.500 8 6.500S1 8.500 0 11z" fill="url(#edge-top)" />
    <path d="M8.500 13c-1 6 4 10 8 9.500 3-1 5-3 5.800-4.500-4 2-10 1.500-11.300-3.500-.4-1.500.1-3 .8-3.800-1.600.2-3 1-3.300 2.300z" fill="#0d5cab" />
  </svg>
);

const FirefoxLogo = (): ReactElement => (
  <svg viewBox="0 0 24 24" className="size-6" aria-hidden="true">
    <defs>
      <linearGradient id="fox" x1=".8" y1="0" x2=".3" y2="1"><stop stopColor="#ffe14a" /><stop offset=".45" stopColor="#ff9a1f" /><stop offset="1" stopColor="#f0275c" /></linearGradient>
    </defs>
    <path d="M14 0c1 3 3 4 5 6l1-1c2 2 3.500 5 3.500 8A11.500 11.500 0 0 1 .5 13c0-3 1-6 3-8l.5 2 2-4 1.500 3C9 5.500 12 4 14 0z" fill="url(#fox)" />
    <circle cx="12.500" cy="13" r="5.500" fill="#7a3fe0" />
    <path d="M5 8c3-1 5 0 7 1-1 2-3 2-4 3 1 3 6 3 8 1-1 5-9 6-11 0-.5-2-.5-3.500 0-5z" fill="#ff9420" />
  </svg>
);

const TaskButton = ({ label, running, active, children }: { label: string; running?: boolean; active?: boolean; children: ReactNode }): ReactElement => (
  <button aria-label={label} className={`flex h-full w-12 flex-col items-center ${active ? "bg-[#37494f]" : ""}`}>
    <span className="flex flex-1 items-center">{children}</span>
    <span className={`h-0.5 ${active ? "w-full" : "w-10"} ${running ? "bg-[#76b9ed]" : ""}`} />
  </button>
);

const Taskbar = (): ReactElement => (
  <footer className="flex h-10 shrink-0 items-center bg-linear-to-r from-[#00181f] to-[#000818] text-[12px] text-white">
    <button aria-label="Start" className="flex h-full w-12 items-center justify-center">
      <svg viewBox="0 0 16 16" className="size-4" fill="currentColor"><path d="M0 2.300l6.500-.9v6.200H0zM7.300 1.300L16 0v7.600H7.300zM0 8.400h6.500v6.200L0 13.700zM7.300 8.400H16V16l-8.700-1.300z" /></svg>
    </button>
    <label className="flex h-full w-72 items-center border-y border-[#d5d5d5] bg-[#f1f1f1] pr-1 pl-3">
      <svg viewBox="0 0 18 18" className="size-[18px] shrink-0" fill="none" stroke="#111" strokeWidth="1.300" aria-hidden="true"><circle cx="11" cy="6.500" r="5.500" /><path d="M7 10.500L.5 17" /></svg>
      <input aria-label="Type here to search" placeholder="Type here to search" className="ml-2.5 w-40 bg-transparent text-[14px] outline-none placeholder:text-[#3f3f3f]" />
      <Gifts />
    </label>
    <div className="flex h-full gap-px">
      <TaskButton label="Task view">
        <svg viewBox="0 0 17 16" className="h-4 w-[17px]" fill="none" stroke="currentColor"><path d="M1 2.500h10M1 13.500h10M1.500 5.500h9v5h-9zM1.500 0v2.500M10.500 0v2.500M1.500 13.500V16M10.500 13.500V16M14.500 1v3M14.500 6v9" /></svg>
      </TaskButton>
      <span className="w-px" />
      <TaskButton label="Edge" running><EdgeLogo /></TaskButton>
      <TaskButton label="File Explorer" running active><ExplorerFolder className="h-[21px] w-6" /></TaskButton>
      <TaskButton label="Firefox"><FirefoxLogo /></TaskButton>
      <TaskButton label="Opera" running>
        <svg viewBox="0 0 24 24" className="size-6" fillRule="evenodd" aria-hidden="true">
          <defs><linearGradient id="opera" x1="0" y1="0" x2="0" y2="1"><stop stopColor="#ff2a3c" /><stop offset="1" stopColor="#b0101c" /></linearGradient></defs>
          <path d="M12 0a12 12 0 1 0 0 24 12 12 0 0 0 0-24zM12.500 3.500c3 0 4.500 4 4.500 8.500s-1.500 8.500-4.500 8.500S8 16.500 8 12s1.500-8.500 4.500-8.500z" fill="url(#opera)" />
        </svg>
      </TaskButton>
    </div>
    <div className="ml-auto flex items-center gap-2">
      <svg viewBox="0 0 16 16" className="size-4" fill="none" stroke="currentColor" strokeWidth="1.300"><path d="M2 11l6-6 6 6" /></svg>
      <svg viewBox="0 0 16 16" className="size-4" fill="none" stroke="currentColor"><path d="M3.500 5.500h7v6h-7zM10.500 7.500l3-1.500v5l-3-1.500M4 2.500q4-2 7 0M4 14q4 2 7 0" /></svg>
      <svg viewBox="0 0 16 16" className="size-4" fill="none" stroke="currentColor"><path d="M.5 6v4h2.500l3.500 3V3L3 6zM8.500 6q1.500 2 0 4M10.500 4.500q3 3.500 0 7M12.500 3q4.500 5 0 10" /></svg>
      <svg viewBox="0 0 16 16" className="size-4" fill="none" stroke="currentColor"><path d="M.5 1.500h4v3h-4zM2.500 4.500v9M6 3.500h9.500v7h-11M10 10.500v3M6 13.500h8" /></svg>
      <time className="w-[56px] text-center text-[11px] leading-[18px]">2:12 PM 1/27/2026</time>
      <button aria-label="Notifications" className="ml-2">
        <svg viewBox="0 0 16 16" className="size-4" fill="none" stroke="currentColor" strokeWidth="1.200"><path d="M.5 1.500h15v11H10L8 15l-2-2.500H.5z" /></svg>
      </button>
      <span className="ml-3 h-10 w-[5px] border-l border-[#3b4450]" />
    </div>
  </footer>
);

const Watermark = (): ReactElement => (
  <div className="pointer-events-none absolute right-[49px] bottom-[46px] flex items-center gap-1.5 font-['Roboto_Condensed',Roboto,sans-serif] text-[36px] leading-none font-light text-[#b4b4bc]/75">
    <span>ANY</span>
    <svg viewBox="0 0 56 64" className="h-16 w-14" fill="none" stroke="currentColor" strokeWidth="4" strokeLinejoin="round" aria-hidden="true">
      <path d="M13 42V5l40 28-39 25v-7l26-18M3 50V13l7-4v42l31-19" />
    </svg>
    <span>RUN</span>
  </div>
);

const App = (): ReactElement => (
  <div className="relative flex h-screen flex-col overflow-hidden bg-[#d6dfe7] font-['Noto_Sans',sans-serif]">
    <div className="flex min-h-0 flex-1 gap-1">
      <Sidebar />
      <div className="flex min-w-0 flex-1 flex-col pb-px">
        <TabStrip />
        <AddressRow />
        <InfoBar />
        <VirusTotalPage />
      </div>
    </div>
    <Taskbar />
    <FileExplorer />
    <Watermark />
  </div>
);

export default App;
